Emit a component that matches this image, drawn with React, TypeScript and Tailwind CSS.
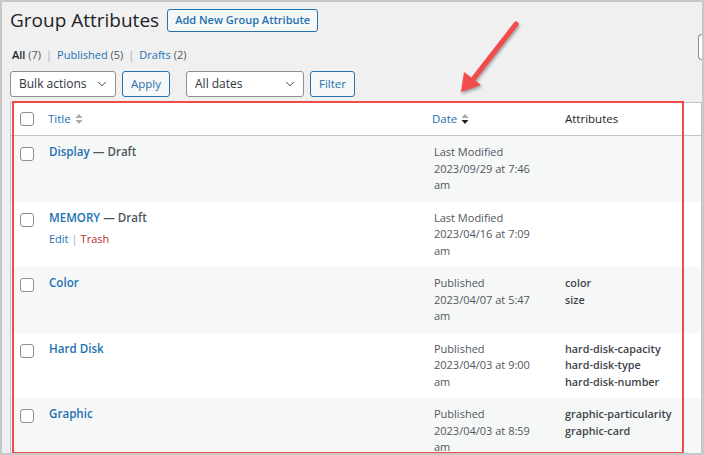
import { ChevronDown } from "lucide-react";

type Row = {
  title: string;
  draft?: boolean;
  actions?: boolean;
  status: string;
  date: string;
  attrs: string[];
};

const rows: Row[] = [
  { title: "Display", draft: true, status: "Last Modified", date: "2023/09/29 at 7:46", attrs: [] },
  { title: "MEMORY", draft: true, actions: true, status: "Last Modified", date: "2023/04/16 at 7:09", attrs: [] },
  { title: "Color", status: "Published", date: "2023/04/07 at 5:47", attrs: ["color", "size"] },
  {
    title: "Hard Disk",
    status: "Published",
    date: "2023/04/03 at 9:00",
    attrs: ["hard-disk-capacity", "hard-disk-type", "hard-disk-number"],
  },
  { title: "Graphic", status: "Published", date: "2023/04/03 at 8:59", attrs: ["graphic-particularity", "graphic-card"] },
];

const CheckBox = () => (
  <span className="block w-[14px] h-[14px] rounded-[3px] border border-[#8c8f94] bg-white" />
);

const SortIcon = ({ down }: { down?: boolean }) => (
  <svg width="8" height="12" viewBox="0 0 8 12" className="ml-[4px]">
    <path d="M4 1 L7.5 5 H0.5 Z" fill="#a7aaad" />
    <path d="M4 11 L7.5 7 H0.5 Z" fill={down ? "#1d2327" : "#a7aaad"} />
  </svg>
);

const Select = ({ label, width }: { label: string; width: string }) => (
  <div
    className={`${width} h-[26px] flex items-center justify-between pl-[8px] pr-[6px] bg-white border border-[#8c8f94] rounded-[3px] text-[12px] text-[#2c3338]`}
  >
    <span>{label}</span>
    <ChevronDown size={14} strokeWidth={1.6} className="text-[#2c3338]" />
  </div>
);

const SecondaryButton = ({ label }: { label: string }) => (
  <div className="h-[26px] flex items-center px-[8px] bg-[#f6f7f7] border border-[#2271b1] rounded-[3px] text-[11.5px] text-[#2271b1]">
    {label}
  </div>
);

export default function App() {
  return (
    <div
      className="relative w-[704px] h-[455px] overflow-hidden bg-[#f0f0f1] border-2 border-[#c8c8c8] text-[#1d2327]"
      style={{ fontFamily: '"Open Sans", "Noto Sans", sans-serif' }}
    >
      <div className="pl-[8px]">
        {/* heading */}
        <div className="flex items-center gap-[8px] mt-[5px] h-[26px]">
          <h1 className="text-[19px] leading-[26px] text-[#1d2327]">Group Attributes</h1>
          <div className="h-[23px] flex items-center px-[7px] bg-[#f6f7f7] border border-[#2271b1] rounded-[3px] text-[11px] font-semibold text-[#2271b1]">
            Add New Group Attribute
          </div>
        </div>

        {/* views + search */}
        <div className="flex items-center justify-between mt-[13px] h-[18px]">
          <div className="text-[11px] leading-[18px] pl-[2px] text-[#50575e]">
            <span className="font-semibold text-[#1d2327]">All</span> (7)
            <span className="mx-[5px] text-[#a7aaad]">|</span>
            <span className="text-[#2271b1]">Published</span> (5)
            <span className="mx-[5px] text-[#a7aaad]">|</span>
            <span className="text-[#2271b1]">Drafts</span> (2)
          </div>
          <div className="w-[6px] h-[26px] mt-[-16px] mr-[-2px] bg-white border border-[#8c8f94] rounded-l-[4px] border-r-0" />
        </div>

        {/* tablenav */}
        <div className="flex items-center mt-[7px] h-[26px]">
          <Select label="Bulk actions" width="w-[106px]" />
          <div className="ml-[6px]">
            <SecondaryButton label="Apply" />
          </div>
          <div className="ml-[16px]">
            <Select label="All dates" width="w-[118px]" />
          </div>
          <div className="ml-[6px]">
            <SecondaryButton label="Filter" />
          </div>
        </div>

        {/* table */}
        <div className="mt-[5px] bg-white border border-[#c3c4c7] border-b-0">
          <div className="flex h-[33px] items-center border-b border-[#c3c4c7] text-[11.5px]">
            <div className="w-[30px] pl-[9px]">
              <CheckBox />
            </div>
            <div className="w-[384px] pl-[7px] flex items-center text-[#2271b1]">
              Title
              <SortIcon />
            </div>
            <div className="w-[132px] pl-[7px] flex items-center text-[#2271b1]">
              Date
              <SortIcon down />
            </div>
            <div className="flex-1 pl-[8px] text-[#1d2327]">Attributes</div>
          </div>

          {rows.map((r, i) => (
            <div
              key={r.title}
              className={`flex py-[8px] text-[11px] leading-[16.5px] ${i % 2 === 0 ? "bg-[#f6f7f7]" : "bg-white"}`}
            >
              <div className="w-[30px] pl-[9px] pt-[3px]">
                <CheckBox />
              </div>
              <div className="w-[384px] pl-[8px]">
                <div className="text-[11.6px] font-semibold">
                  <span className="text-[#2271b1]">{r.title}</span>
                  {r.draft && <span className="text-[#50575e]"> — Draft</span>}
                </div>
                {r.actions && (
                  <div className="mt-[5px] text-[11px]">
                    <span className="text-[#2271b1]">Edit</span>
                    <span className="mx-[3px] text-[#a7aaad]">|</span>
                    <span className="text-[#b32d2e]">Trash</span>
                  </div>
                )}
              </div>
              <div className="w-[132px] pl-[9px] text-[#50575e]">
                <div>{r.status}</div>
                <div>{r.date}</div>
                <div>am</div>
              </div>
              <div className="flex-1 pl-[8px] text-[10.8px] font-semibold text-[#3c434a]">
                {r.attrs.map((a) => (
                  <div key={a}>{a}</div>
                ))}
              </div>
            </div>
          ))}
        </div>
      </div>

      {/* annotation box */}
      <div className="absolute left-[10px] top-[99px] w-[672px] h-[353px] border-2 border-[#ee4b4b] pointer-events-none" />

      {/* annotation arrow */}
      <svg
        className="absolute left-0 top-0 pointer-events-none drop-shadow-[1px_2px_1.5px_rgba(0,0,0,0.35)]"
        width="704"
        height="455"
      >
        <line x1="514" y1="22" x2="472" y2="76" stroke="#f24b4b" strokeWidth="5" strokeLinecap="round" />
        <path d="M459 90 L462 70 L479 83 Z" fill="#f24b4b" />
      </svg>
    </div>
  );
}
